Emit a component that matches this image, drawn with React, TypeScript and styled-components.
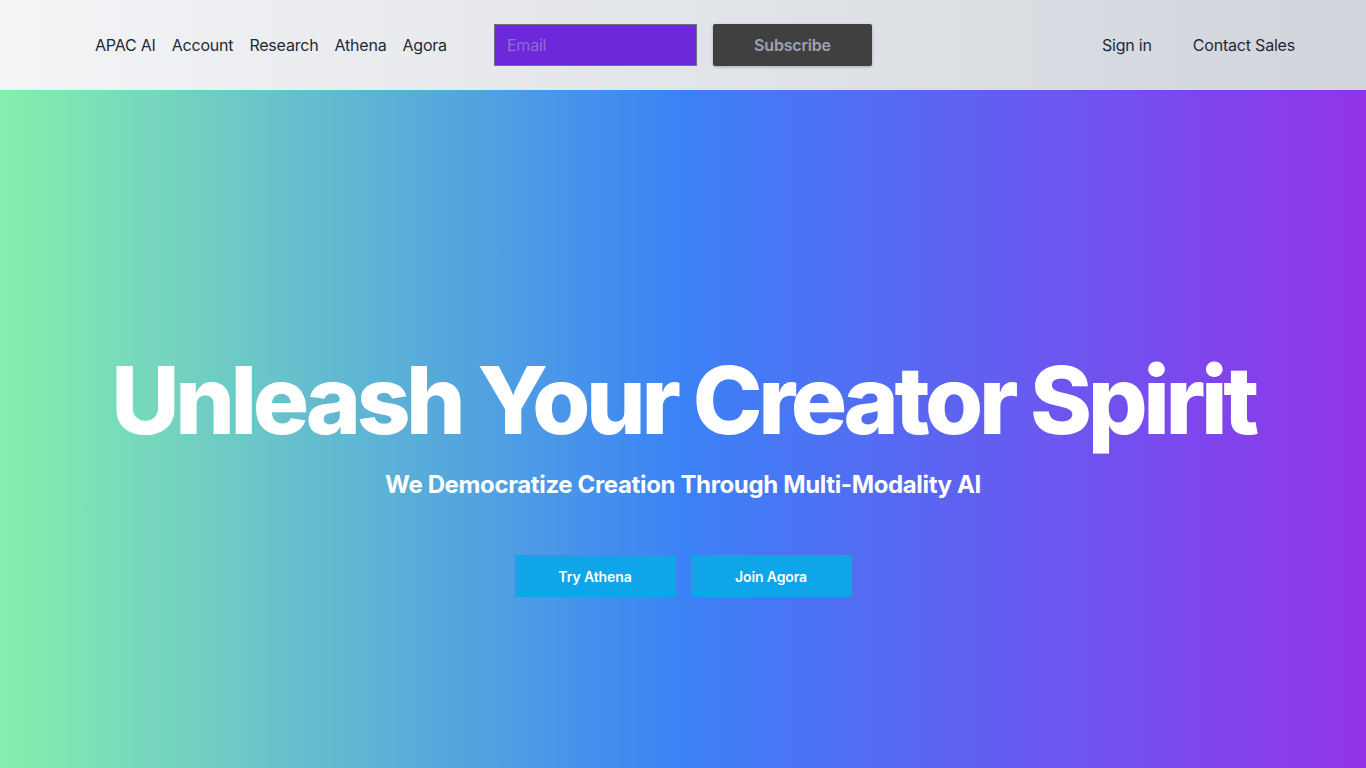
import React from "react";
import styled, { createGlobalStyle } from "styled-components";

const Global = createGlobalStyle`
  html, body { margin: 0; padding: 0; }
  body { font-family: Inter, "Noto Sans", sans-serif; -webkit-font-smoothing: antialiased; }
  * { box-sizing: border-box; }
`;

const Page = styled.div`
  display: flex;
  flex-direction: column;
  height: 768px;
  overflow: hidden;
`;

const Header = styled.header`
  height: 90px;
  flex: none;
  display: flex;
  align-items: center;
  justify-content: space-between;
  padding: 0 71px 0 95px;
  background: linear-gradient(to right, #f3f4f6, #d1d5db);
`;

const Group = styled.div<{ $gap: number }>`
  display: flex;
  align-items: center;
  gap: ${(p) => p.$gap}px;
`;

const NavLink = styled.a`
  font-size: 16px;
  line-height: 24px;
  letter-spacing: -0.2px;
  color: #1f2937;
  text-decoration: none;
  cursor: pointer;
`;

const EmailInput = styled.input`
  width: 203px;
  height: 42px;
  margin-left: 31px;
  background: #6d28d9;
  border: 1px solid #6b7280;
  padding: 0 12px;
  font-family: inherit;
  font-size: 16px;
  letter-spacing: -0.2px;
  color: #fff;
  outline: none;
  &::placeholder { color: #8f6bd6; opacity: 1; }
`;

const SubscribeButton = styled.button`
  width: 159px;
  height: 42px;
  background: #404040;
  color: #9ca3af;
  border: none;
  border-radius: 2px;
  font-family: inherit;
  font-size: 16px;
  font-weight: 600;
  letter-spacing: -0.2px;
  box-shadow: 0 1px 3px rgba(0, 0, 0, 0.25);
  cursor: pointer;
`;

const Hero = styled.main`
  flex: 1;
  display: flex;
  flex-direction: column;
  align-items: center;
  padding-top: 262px;
  background: linear-gradient(to right, #86efac, #3b82f6, #9333ea);
  color: #fff;
  text-align: center;
`;

const Title = styled.h1`
  margin: 0;
  font-size: 94px;
  line-height: 96px;
  font-weight: 800;
  letter-spacing: -4.4px;
  white-space: nowrap;
`;

const Subtitle = styled.p`
  margin: 21px 0 0;
  font-size: 24px;
  line-height: 32px;
  font-weight: 700;
  letter-spacing: -0.36px;
`;

const Actions = styled.div`
  display: flex;
  gap: 15px;
  margin-top: 54px;
`;

const CTA = styled.button`
  width: 161px;
  height: 42px;
  background: #0ea5e9;
  color: #fff;
  border: none;
  font-family: inherit;
  font-size: 14px;
  font-weight: 600;
  letter-spacing: -0.1px;
  cursor: pointer;
`;

export default function App() {
  return (
    <>
      <Global />
      <Page>
        <Header>
          <Group $gap={16}>
            <NavLink>APAC AI</NavLink>
            <NavLink>Account</NavLink>
            <NavLink>Research</NavLink>
            <NavLink>Athena</NavLink>
            <NavLink>Agora</NavLink>
            <EmailInput placeholder="Email" />
            <SubscribeButton>Subscribe</SubscribeButton>
          </Group>
          <Group $gap={41}>
            <NavLink>Sign in</NavLink>
            <NavLink>Contact Sales</NavLink>
          </Group>
        </Header>
        <Hero>
          <Title>Unleash Your Creator Spirit</Title>
          <Subtitle>We Democratize Creation Through Multi-Modality AI</Subtitle>
          <Actions>
            <CTA>Try Athena</CTA>
            <CTA>Join Agora</CTA>
          </Actions>
        </Hero>
      </Page>
    </>
  );
}
